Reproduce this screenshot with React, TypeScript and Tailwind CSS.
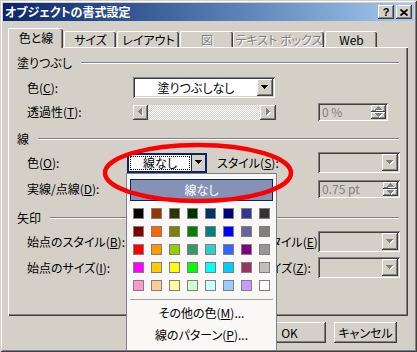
import React from "react";

const RAISED =
  "shadow-[inset_-1px_-1px_#404040,inset_1px_1px_#ffffff,inset_-2px_-2px_#808080,inset_2px_2px_#d4d0c8]";
const SUNKEN =
  "shadow-[inset_1px_1px_#808080,inset_-1px_-1px_#ffffff,inset_2px_2px_#404040,inset_-2px_-2px_#d4d0c8]";

const ARROW_DOWN = "M0 0h7v1H0zM1 1h5v1H1zM2 2h3v1H2zM3 3h1v1H3z";
const ARROW_UP = "M3 0h1v1H3zM2 1h3v1H2zM1 2h5v1H1zM0 3h7v1H0z";
const ARROW_LEFT = "M3 0h1v7H3zM2 1h1v5H2zM1 2h1v3H1zM0 3h1v1H0z";
const ARROW_RIGHT = "M0 0h1v7H0zM1 1h1v5H1zM2 2h1v3H2zM3 3h1v1H3z";

function Glyph({ d, w, h, disabled }: { d: string; w: number; h: number; disabled?: boolean }) {
  return (
    <svg width={w + 1} height={h + 1} viewBox={`0 0 ${w + 1} ${h + 1}`} shapeRendering="crispEdges">
      {disabled && <path d={d} fill="#ffffff" transform="translate(1 1)" />}
      <path d={d} fill={disabled ? "#808080" : "#000000"} />
    </svg>
  );
}

function Acc({ pre, k, post = "" }: { pre: string; k: string; post?: string }) {
  return (
    <span className="whitespace-nowrap">
      {pre}(<u className="underline-offset-[1px]">{k}</u>){post}
    </span>
  );
}

function DropBtn({ disabled }: { disabled?: boolean }) {
  return (
    <div className={`w-[16px] h-full flex items-center justify-center bg-[#d4d0c8] ${RAISED}`}>
      <Glyph d={ARROW_DOWN} w={7} h={4} disabled={disabled} />
    </div>
  );
}

function Combo({
  cls,
  text,
  disabled,
}: {
  cls: string;
  text?: string;
  disabled?: boolean;
}) {
  return (
    <div className={`flex p-[2px] ${SUNKEN} ${disabled ? "bg-[#d4d0c8]" : "bg-white"} ${cls}`}>
      <div className="flex-1 flex items-center justify-center">{text}</div>
      <DropBtn disabled={disabled} />
    </div>
  );
}

function SpinBox({ cls, text }: { cls: string; text: string }) {
  return (
    <div className={`flex p-[2px] bg-[#d4d0c8] ${SUNKEN} ${cls}`}>
      <div className="flex-1 flex items-center pl-[2px] text-[#808080]">{text}</div>
      <div className="w-[15px] flex flex-col">
        <div className={`flex-1 flex items-center justify-center bg-[#d4d0c8] ${RAISED}`}>
          <Glyph d={ARROW_UP} w={7} h={4} disabled />
        </div>
        <div className={`flex-1 flex items-center justify-center bg-[#d4d0c8] ${RAISED}`}>
          <Glyph d={ARROW_DOWN} w={7} h={4} disabled />
        </div>
      </div>
    </div>
  );
}

function GroupHeader({ label, mt }: { label: string; mt: string }) {
  return (
    <div className={`h-[14px] pl-[9px] pr-[9px] flex items-center ${mt}`}>
      <span className="whitespace-nowrap">{label}</span>
      <div className="flex-1 ml-[9px] flex flex-col">
        <div className="h-px bg-[#808080]" />
        <div className="h-px bg-white" />
      </div>
    </div>
  );
}

const SWATCHES = [
  "bg-[#000000]", "bg-[#993300]", "bg-[#333300]", "bg-[#003300]", "bg-[#003366]", "bg-[#000080]", "bg-[#333399]", "bg-[#333333]",
  "bg-[#800000]", "bg-[#ff6600]", "bg-[#808000]", "bg-[#008000]", "bg-[#008080]", "bg-[#0000ff]", "bg-[#666699]", "bg-[#808080]",
  "bg-[#ff0000]", "bg-[#ff9900]", "bg-[#99cc00]", "bg-[#339966]", "bg-[#33cccc]", "bg-[#3366ff]", "bg-[#800080]", "bg-[#969696]",
  "bg-[#ff00ff]", "bg-[#ffcc00]", "bg-[#ffff00]", "bg-[#00ff00]", "bg-[#00ffff]", "bg-[#00ccff]", "bg-[#993366]", "bg-[#c0c0c0]",
  "bg-[#ff99cc]", "bg-[#ffcc99]", "bg-[#ffff99]", "bg-[#ccffcc]", "bg-[#ccffff]", "bg-[#99ccff]", "bg-[#cc99ff]", "bg-[#ffffff]",
];

function Tab({ cls, label, selected, disabled }: { cls: string; label: string; selected?: boolean; disabled?: boolean }) {
  return (
    <div
      className={`flex items-center justify-center bg-[#d4d0c8] border-t border-l border-white rounded-tl-[2px] rounded-tr-[2px] shadow-[inset_-1px_0_#404040,inset_-2px_0_#808080] ${
        selected ? "h-[20px] -mb-px relative z-10 pb-[2px]" : "h-[16px]"
      } ${disabled ? "text-[#808080] [text-shadow:1px_1px_#ffffff]" : ""} ${cls}`}
    >
      <span className="whitespace-nowrap">{label}</span>
    </div>
  );
}

export default function App() {
  return (
    <div className="relative w-[417px] h-[352px] overflow-hidden bg-[#d4d0c8] text-[12px] leading-none text-black font-['Noto_Sans_CJK_JP',sans-serif] [font-feature-settings:'palt'] pt-[3px] shadow-[inset_1px_1px_#d4d0c8,inset_-1px_-1px_#404040,inset_2px_2px_#ffffff,inset_-2px_-2px_#808080]">
      {/* Title bar */}
      <div className="mx-[3px] h-[18px] flex items-center bg-linear-to-r from-[#0a246a] to-[#a6caf0] pl-[2px] pr-[2px]">
        <span className="text-white font-bold whitespace-nowrap">オブジェクトの書式設定</span>
        <div className="ml-auto flex gap-[2px]">
          <div className={`w-[16px] h-[14px] bg-[#d4d0c8] ${RAISED} flex items-center justify-center font-bold text-[11px] font-['Liberation_Sans',sans-serif]`}>
            ?
          </div>
          <div className={`w-[16px] h-[14px] bg-[#d4d0c8] ${RAISED} flex items-center justify-center`}>
            <svg width="8" height="7" viewBox="0 0 8 7">
              <path d="M0.5 0.5L7.5 6.5M7.5 0.5L0.5 6.5" stroke="#000" strokeWidth="1.7" />
            </svg>
          </div>
        </div>
      </div>

      {/* Tabs */}
      <div className="mt-[7px] h-[19px] pl-[8px] flex items-end">
        <Tab cls="w-[55px]" label="色と線" selected />
        <Tab cls="ml-[1px] w-[52px]" label="サイズ" />
        <Tab cls="ml-[1px] w-[62px]" label="レイアウト" />
        <Tab cls="ml-[1px] w-[53px]" label="図" disabled />
        <Tab cls="w-[91px]" label="テキスト ボックス" disabled />
        <Tab cls="ml-[1px] w-[52px]" label="Web" />
      </div>

      {/* Panel */}
      <div className="mx-[8px] w-[400px] h-[269px] flex flex-col shadow-[inset_1px_1px_#ffffff,inset_-1px_-1px_#404040,inset_-2px_-2px_#808080]">
        <GroupHeader label="塗りつぶし" mt="mt-[9px]" />
        <div className="mt-[7px] h-[21px] pl-[19px] flex items-center">
          <div className="w-[106px]"><Acc pre="色" k="C" post=":" /></div>
          <Combo cls="w-[142px] h-[21px]" text="塗りつぶしなし" />
        </div>
        <div className="mt-[4px] h-[20px] pl-[19px] flex items-center">
          <div className="w-[106px]"><Acc pre="透過性" k="T" post=":" /></div>
          <div className="w-[143px] h-[15px] flex">
            <div className={`w-[15px] h-full flex items-center justify-center bg-[#d4d0c8] ${RAISED}`}>
              <Glyph d={ARROW_LEFT} w={4} h={7} disabled />
            </div>
            <div className="flex-1 h-full [background-image:repeating-conic-gradient(#ffffff_0%_25%,#d4d0c8_0%_50%)] [background-size:2px_2px]" />
            <div className={`w-[16px] h-full flex items-center justify-center bg-[#d4d0c8] ${RAISED}`}>
              <Glyph d={ARROW_RIGHT} w={4} h={7} disabled />
            </div>
          </div>
          <SpinBox cls="ml-[42px] w-[70px] h-[18px]" text="0 %" />
        </div>

        <GroupHeader label="線" mt="mt-[10px]" />
        <div className="mt-[6px] h-[21px] pl-[19px] flex items-center">
          <div className="w-[100px]"><Acc pre="色" k="O" post=":" /></div>
          <div className="w-[80px] h-[20px] flex border-2 border-[#0a246a] bg-white">
            <div className="flex-1 p-[1px]">
              <div className="h-full border border-dotted border-black flex items-center justify-center">線なし</div>
            </div>
            <div className="w-[14px] border-l border-[#0a246a] bg-[#d4d0c8] flex items-center justify-center">
              <Glyph d={ARROW_DOWN} w={7} h={4} />
            </div>
          </div>
          <div className="ml-[10px] w-[101px]"><Acc pre="スタイル" k="S" post=":" /></div>
          <Combo cls="w-[82px] h-[21px]" disabled />
        </div>
        <div className="mt-[6px] h-[20px] pl-[19px] flex items-center">
          <div className="w-[100px]"><Acc pre="実線/点線" k="D" post=":" /></div>
          <Combo cls="w-[80px] h-[20px]" />
          <div className="ml-[10px] w-[101px]"><Acc pre="太さ" k="W" post=":" /></div>
          <SpinBox cls="w-[82px] h-[18px]" text="0.75 pt" />
        </div>

        <GroupHeader label="矢印" mt="mt-[12px]" />
        <div className="mt-[6px] h-[21px] pl-[19px] flex items-center">
          <div className="w-[100px]"><Acc pre="始点のスタイル" k="B" post=":" /></div>
          <Combo cls="w-[80px] h-[21px]" disabled />
          <div className="ml-[17px] w-[94px]"><Acc pre="終点のスタイル" k="E" post=":" /></div>
          <Combo cls="w-[82px] h-[21px]" disabled />
        </div>
        <div className="mt-[5px] h-[21px] pl-[19px] flex items-center">
          <div className="w-[100px]"><Acc pre="始点のサイズ" k="I" post=":" /></div>
          <Combo cls="w-[80px] h-[21px]" disabled />
          <div className="ml-[17px] w-[94px]"><Acc pre="終点のサイズ" k="Z" post=":" /></div>
          <Combo cls="w-[82px] h-[21px]" disabled />
        </div>
      </div>

      {/* Buttons */}
      <div className="mt-[6px] h-[21px] flex pl-[253px]">
        <div className={`w-[73px] h-full flex items-center justify-center ${RAISED}`}>OK</div>
        <div className={`ml-[8px] w-[63px] h-full flex items-center justify-center ${RAISED}`}>キャンセル</div>
      </div>

      {/* Red underline annotation */}
      <div className="absolute left-[17px] top-[43px] w-[38px] h-[3px] rounded-full bg-[#ff0000]" />

      {/* Dropdown palette popup */}
      <div className="absolute left-[126px] top-[173px] w-[151px] h-[178px] bg-[#f9f8f7] border border-[#808080] flex flex-col">
        <div className="mt-[5px] mx-[3px] h-[22px] bg-[#8592b5] border border-[#0a246a] flex items-center justify-center text-white">
          線なし
        </div>
        <div className="mt-[7px] ml-[6px] grid grid-cols-[repeat(8,11px)] auto-rows-[11px] gap-[7px]">
          {SWATCHES.map((c, i) => (
            <div key={i} className={`w-[11px] h-[11px] border border-[#808080] ${c}`} />
          ))}
        </div>
        <div className="mt-[8px] mx-[3px] h-px bg-[#a6a6a6]" />
        <div className="mt-[2px] h-[22px] flex items-center justify-center">
          <Acc pre="その他の色" k="M" post="..." />
        </div>
        <div className="h-[22px] flex items-center justify-center">
          <Acc pre="線のパターン" k="P" post="..." />
        </div>
      </div>

      {/* Red ellipse annotation */}
      <svg className="absolute left-0 top-0 pointer-events-none" width="417" height="352" viewBox="0 0 417 352">
        <ellipse cx="198" cy="173" rx="93" ry="28" fill="none" stroke="#ff0000" strokeWidth="4.5" />
      </svg>
    </div>
  );
}
